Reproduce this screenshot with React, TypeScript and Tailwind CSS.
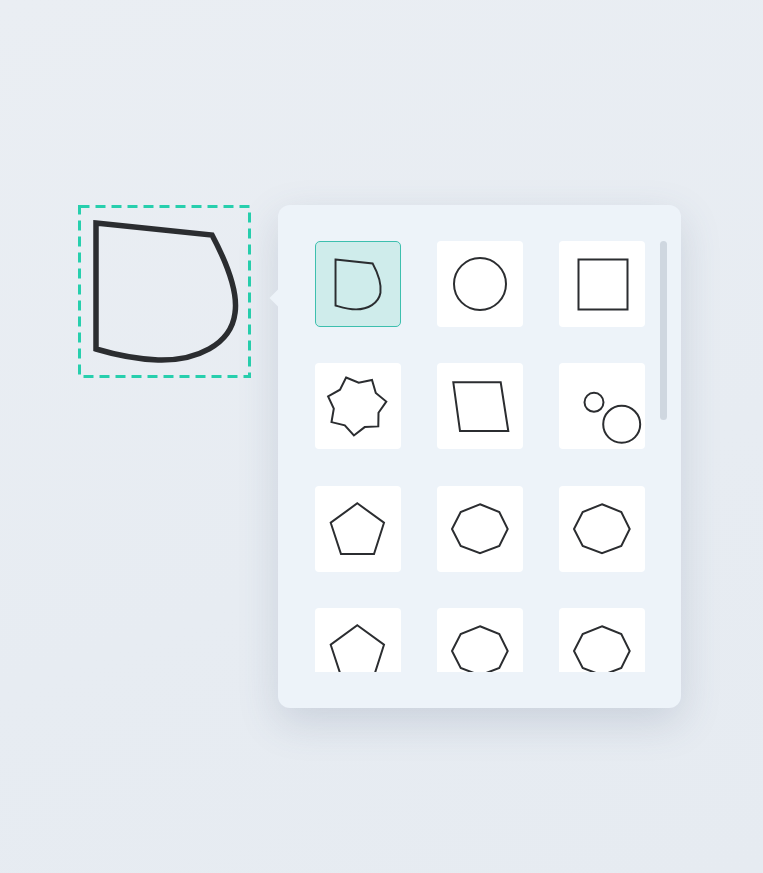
import type { ReactNode } from "react"

const INK = "#2b2d30"

const starPoints = (() => {
  const cx = 41.6
  const cy = 42.6
  const pts: string[] = []
  for (let i = 0; i < 14; i++) {
    const a = ((-110.5 + i * (360 / 14)) * Math.PI) / 180
    const r = i % 2 === 0 ? 30 : 23
    pts.push(`${(cx + r * Math.cos(a)).toFixed(1)},${(cy + r * Math.sin(a)).toFixed(1)}`)
  }
  return pts.join(" ")
})()

const octagon = "43,18.3 62.3,26 70.7,43 62.3,60 43,67.3 23.7,60 15,43 23.7,26"
const pentagon = "42.3,17.3 69,36.7 59,68 26,68 15.7,36.7"

const Glyph = ({ children }: { children: ReactNode }) => (
  <svg width="86" height="86" viewBox="0 0 86 86" fill="none" stroke={INK} strokeWidth="2">
    {children}
  </svg>
)

const shapes: ReactNode[] = [
  <path d="M20 18 L58 22 C64 33 67 44 66 52 C64 63 53 69 41 69 C33 69 27 67 20 65 Z" />,
  <circle cx="43" cy="43" r="26" />,
  <rect x="19.5" y="18.5" width="49" height="50" />,
  <polygon points={starPoints} />,
  <polygon points="16.3,19.3 63.7,19.3 71.3,68 23,68" />,
  <>
    <circle cx="35" cy="39.3" r="9.5" />
    <circle cx="62.7" cy="61.3" r="18.5" />
  </>,
  <polygon points={pentagon} />,
  <polygon points={octagon} />,
  <polygon points={octagon} />,
  <polygon points={pentagon} />,
  <polygon points={octagon} />,
  <polygon points={octagon} />,
]

const Tile = ({ selected, children }: { selected?: boolean; children: ReactNode }) => (
  <div
    className={
      selected
        ? "w-[86px] h-[86px] rounded-[5px] border border-[#3dbfae] bg-[#cfeceb] flex items-center justify-center"
        : "w-[86px] h-[86px] rounded-[4px] bg-white flex items-center justify-center"
    }
  >
    <Glyph>{children}</Glyph>
  </div>
)

export default function App() {
  return (
    <div className="min-h-[873px] w-full bg-[linear-gradient(160deg,#eaeef3_0%,#e7ecf2_60%,#e6ebf1_100%)]">
      <div className="flex items-start gap-[27px] pt-[205px] pl-[78px]">
        {/* shape on canvas */}
        <svg width="173" height="173" viewBox="0 0 173 173" fill="none">
          <rect x="1.5" y="1.5" width="170" height="170" stroke="#27cfad" strokeWidth="3" strokeDasharray="10 6" />
          <path
            d="M18 18 L134 30 C151 62 160 88 157 108 C153 140 118 156 80 155 C58 154 38 150 18 144 Z"
            stroke={INK}
            strokeWidth="5.5"
            strokeLinejoin="miter"
          />
        </svg>

        {/* shape picker */}
        <div className="relative w-[403px] h-[503px] rounded-xl bg-[#edf3f9] shadow-[0_14px_40px_rgba(70,90,120,0.18)] flex pl-[37px] pr-[14px] py-[36px]">
          <div className="absolute -left-[6px] top-[87px] w-[12px] h-[12px] rotate-45 bg-[#edf3f9]" />
          <div className="w-[330px] h-[431px] overflow-hidden">
            <div className="grid grid-cols-3 gap-x-[36px] gap-y-[36.3px]">
              {shapes.map((s, i) => (
                <Tile key={i} selected={i === 0}>
                  {s}
                </Tile>
              ))}
            </div>
          </div>
          <div className="ml-[15px] w-[7px] h-[179px] rounded-full bg-[#cfd7e0]" />
        </div>
      </div>
    </div>
  )
}
